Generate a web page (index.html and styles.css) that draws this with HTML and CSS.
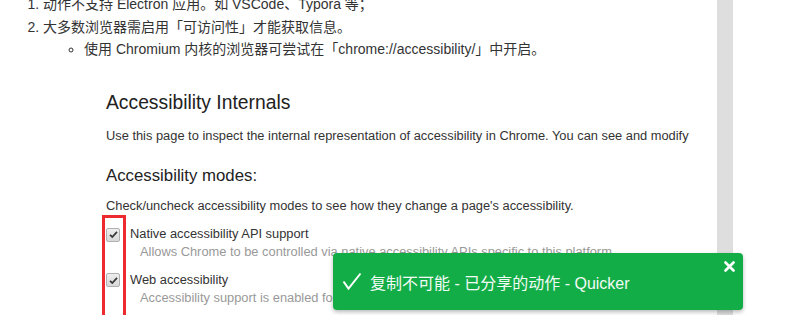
FILE: index.html
```html
<!DOCTYPE html>
<html lang="zh-CN">
<head>
<meta charset="utf-8">
<title>Quicker</title>
<link rel="stylesheet" href="styles.css">
</head>
<body>
<div class="page">
  <main class="doc">
    <ol class="steps">
      <li>动作不支持 Electron 应用。如 VSCode、Typora 等；</li>
      <li>大多数浏览器需启用「可访问性」才能获取信息。
        <ul class="sub">
          <li>使用 Chromium 内核的浏览器可尝试在「chrome://accessibility/」中开启。</li>
        </ul>
      </li>
    </ol>
    <figure class="shot">
      <h1 class="shot-title">Accessibility Internals</h1>
      <p class="shot-text">Use this page to inspect the internal representation of accessibility in Chrome. You can see and modify</p>
      <h2 class="shot-sub">Accessibility modes:</h2>
      <p class="shot-text shot-text-tight">Check/uncheck accessibility modes to see how they change a page's accessibility.</p>
      <div class="mode">
        <span class="cb"><svg width="11" height="11" viewBox="0 0 11 11"><path d="M2 5.8 L4.3 8 L9 2.8" fill="none" stroke="#3a3a3a" stroke-width="1.8"/></svg></span>
        <div class="mode-body">
          <div class="mode-label">Native accessibility API support</div>
          <div class="mode-desc">Allows Chrome to be controlled via native accessibility APIs specific to this platform.</div>
        </div>
      </div>
      <div class="mode mode-second">
        <span class="cb"><svg width="11" height="11" viewBox="0 0 11 11"><path d="M2 5.8 L4.3 8 L9 2.8" fill="none" stroke="#3a3a3a" stroke-width="1.8"/></svg></span>
        <div class="mode-body">
          <div class="mode-label">Web accessibility</div>
          <div class="mode-desc">Accessibility support is enabled for web content.</div>
        </div>
      </div>
      <div class="highlight"></div>
    </figure>
  </main>
  <div class="rail"></div>
  <div class="side"></div>
  <div class="toast">
    <svg class="toast-check" width="20" height="20" viewBox="0 0 20 20"><path d="M1.5 9.5 L6.5 16.5 L18.5 1.5" fill="none" stroke="#fff" stroke-width="2"/></svg>
    <span class="toast-text">复制不可能 - 已分享的动作 - Quicker</span>
    <svg class="toast-close" width="11" height="11" viewBox="0 0 11 11"><path d="M1.5 1.5 L9.5 9.5 M9.5 1.5 L1.5 9.5" stroke="#fff" stroke-width="2.6" stroke-linecap="round"/></svg>
  </div>
</div>
</body>
</html>
```

FILE: styles.css
```css
html, body {
  margin: 0;
  padding: 0;
  background: #fff;
}

.page {
  position: relative;
  display: flex;
  width: 800px;
  height: 315px;
  overflow: hidden;
  font-family: "Liberation Sans", "Noto Sans CJK SC", Arial, sans-serif;
  color: #333;
}

.doc {
  flex: 0 0 717px;
  min-width: 0;
}

.rail {
  flex: 0 0 16px;
  background: #dedede;
}

.side {
  flex: 1;
}

.steps {
  margin: -7px 0 0 0;
  padding-left: 43px;
  font-size: 14px;
  line-height: 22.5px;
}

.sub {
  margin: 0;
  padding-left: 41px;
  list-style-type: circle;
}

.shot {
  position: relative;
  margin: 0;
  padding: 31px 0 0 106px;
  color: #333;
}

.shot-title {
  margin: 0;
  font-size: 19.3px;
  font-weight: normal;
  line-height: 22px;
  color: #222;
}

.shot-text {
  margin: 14px 0 0 0;
  font-size: 12.85px;
  line-height: 15px;
}

.shot-sub {
  margin: 23px 0 0 0;
  font-size: 16.8px;
  font-weight: normal;
  line-height: 20px;
  color: #222;
}

.shot-text-tight {
  margin-top: 12px;
}

.mode {
  display: flex;
  align-items: flex-start;
  margin-top: 12px;
  font-size: 12.85px;
  line-height: 18px;
}

.mode-second {
  margin-top: 10.5px;
}

.cb {
  flex: 0 0 auto;
  display: flex;
  align-items: center;
  justify-content: center;
  box-sizing: border-box;
  width: 14px;
  height: 14px;
  margin: 3px 10px 0 0;
  border: 1px solid #b0b0b0;
  border-radius: 2px;
  background: linear-gradient(#eeeeee, #d8d8d8);
}

.mode-second .cb {
  margin-top: 2px;
}

.mode-body {
  white-space: nowrap;
}

.mode-label {
  color: #333;
}

.mode-desc {
  padding-left: 10px;
  color: #999;
}

.highlight {
  position: absolute;
  left: 102px;
  top: 154.5px;
  width: 24px;
  height: 140px;
  box-sizing: border-box;
  border: 3px solid #ec2a2f;
}

.toast {
  position: absolute;
  left: 333px;
  top: 253px;
  width: 410px;
  height: 57px;
  box-sizing: border-box;
  display: flex;
  align-items: center;
  padding-left: 9px;
  background: #13ad48;
  border-radius: 4px;
  box-shadow: 0 2px 4px rgba(0, 0, 0, 0.28);
  color: #fff;
}

.toast-check {
  flex: 0 0 auto;
  margin-right: 8px;
}

.toast-text {
  font-size: 16px;
  white-space: nowrap;
  color: #f2fbf5;
}

.toast-close {
  position: absolute;
  top: 8px;
  right: 8px;
}
```
